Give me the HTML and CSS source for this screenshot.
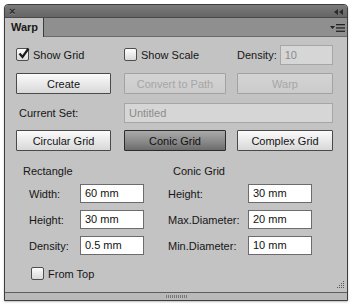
FILE: index.html
```html
<!DOCTYPE html>
<html>
<head>
<meta charset="utf-8">
<link rel="stylesheet" href="styles.css">
</head>
<body>
<div class="panel">
  <div class="titlebar">
    <span class="close">×</span>
    <svg class="collapse" width="9" height="6" viewBox="0 0 9 6"><path d="M4 0 L0 3 L4 6 Z M9 0 L5 3 L9 6 Z" fill="#2a2a2a"/></svg>
  </div>
  <div class="tabbar">
    <div class="tab">Warp</div>
    <svg class="flyout" width="15" height="8" viewBox="0 0 15 8"><path d="M0 2 L5 2 L2.5 5 Z" fill="#222"/><rect x="6" y="0" width="9" height="1.3" fill="#222"/><rect x="6" y="3.3" width="9" height="1.3" fill="#222"/><rect x="6" y="6.6" width="9" height="1.3" fill="#222"/></svg>
  </div>
  <div class="content">
    <div class="row3 r1">
      <label class="check"><span class="box checked"><svg width="13" height="13" viewBox="0 0 13 13"><path d="M2.5 6.5 L5.5 10 L11.5 1.5" fill="none" stroke="#1a1a1a" stroke-width="2.2"/></svg></span>Show Grid</label>
      <label class="check"><span class="box"></span>Show Scale</label>
      <div class="density"><span>Density:</span><span class="input disabled dens">10</span></div>
    </div>
    <div class="row3 r2">
      <div class="btn">Create</div>
      <div class="btn disabled">Convert to Path</div>
      <div class="btn disabled">Warp</div>
    </div>
    <div class="row3 r3">
      <div class="lbl">Current Set:</div>
      <div class="input disabled span2">Untitled</div>
    </div>
    <div class="row3 r4">
      <div class="btn">Circular Grid</div>
      <div class="btn pressed">Conic Grid</div>
      <div class="btn">Complex Grid</div>
    </div>
    <div class="params">
      <div class="head h1">Rectangle</div>
      <div class="head h2">Conic Grid</div>
      <div class="plbl">Width:</div><div class="input">60 mm</div>
      <div class="plbl c4">Height:</div><div class="input">30 mm</div>
      <div class="plbl">Height:</div><div class="input">30 mm</div>
      <div class="plbl c4">Max.Diameter:</div><div class="input">20 mm</div>
      <div class="plbl">Density:</div><div class="input">0.5 mm</div>
      <div class="plbl c4">Min.Diameter:</div><div class="input">10 mm</div>
    </div>
    <label class="check fromtop"><span class="box"></span>From Top</label>
    <svg class="resize" width="9" height="9" viewBox="0 0 9 9" fill="#555"><rect x="7" y="1" width="1" height="1"/><rect x="5" y="3" width="1" height="1"/><rect x="7" y="3" width="1" height="1"/><rect x="3" y="5" width="1" height="1"/><rect x="5" y="5" width="1" height="1"/><rect x="7" y="5" width="1" height="1"/><rect x="1" y="7" width="1" height="1"/><rect x="3" y="7" width="1" height="1"/><rect x="5" y="7" width="1" height="1"/><rect x="7" y="7" width="1" height="1"/></svg>
  </div>
  <div class="bottombar"><span class="grip"></span></div>
</div>
</body>
</html>
```
FILE: styles.css
```css
html, body { margin: 0; padding: 0; background: #fff; }
body {
  font-family: "Liberation Sans", Arial, sans-serif;
  font-size: 11px;
  color: #161616;
  width: 352px;
  height: 305px;
  overflow: hidden;
}
.panel {
  margin: 4px 0 0 4px;
  width: 344px;
  height: 297px;
  box-sizing: border-box;
  border: 1px solid #3e3e3e;
  border-radius: 4px 4px 0 0;
  background: #c3c3c3;
  display: flex;
  flex-direction: column;
  box-shadow: 0 1px 2px rgba(0,0,0,0.25);
}
.titlebar {
  height: 12px;
  flex: none;
  background: linear-gradient(#7a7a7a, #656565);
  border-radius: 3px 3px 0 0;
  display: flex;
  align-items: center;
  justify-content: space-between;
  padding: 0 4px 0 4px;
  border-bottom: 1px solid #4a4a4a;
}
.close {
  font-size: 11px;
  line-height: 10px;
  color: #2b2b2b;
  font-weight: bold;
  text-shadow: 0 1px 0 #8a8a8a;
}
.collapse { margin-top: 1px; }
.tabbar {
  height: 18px;
  flex: none;
  background: #8f8f8f;
  display: flex;
  align-items: stretch;
  justify-content: space-between;
  border-bottom: 1px solid #6a6a6a;
}
.tab {
  width: 39px;
  box-sizing: border-box;
  background: #c3c3c3;
  border-right: 1px solid #3c3c3c;
  margin-bottom: -1px;
  padding: 3px 0 0 6px;
  font-weight: bold;
  color: #1a1a1a;
}
.flyout { align-self: center; margin-right: 2px; margin-top: 2px; }
.content {
  flex: 1;
  position: relative;
  padding: 7px 0 0 11px;
  display: flex;
  flex-direction: column;
}
.row3 {
  display: grid;
  grid-template-columns: 95px 115px 107px;
}
.row3 > :nth-child(2) { margin-left: 13px; }
.row3 > :nth-child(3) { margin-left: 11px; }
.r1 { height: 21px; align-items: center; }
.r2 { margin-top: 8px; height: 21px; }
.r3 { margin-top: 9px; height: 20px; align-items: center; }
.r4 { margin-top: 7px; height: 21px; }
.check { display: flex; align-items: center; gap: 4px; }
.box {
  width: 13px;
  height: 13px;
  box-sizing: border-box;
  border: 1px solid #4e4e4e;
  border-radius: 2px;
  background: linear-gradient(#fdfdfd, #d9d9d9);
  position: relative;
  flex: none;
}
.box svg { position: absolute; left: 0; top: -2px; }
.density { display: flex; align-items: center; justify-content: flex-end; gap: 3px; }
.input {
  box-sizing: border-box;
  height: 20px;
  background: #fff;
  border: 1px solid #6c6c6c;
  padding: 3px 0 0 4px;
  font-size: 11px;
  color: #111;
  line-height: 13px;
}
.input.disabled {
  background: #d6d6d6;
  border-color: #a6a6a6;
  color: #8c8c8c;
}
.dens { width: 63px; height: 20px; }
.span2 { grid-column: 2 / 4; }
.lbl { padding-left: 3px; }
.btn {
  box-sizing: border-box;
  height: 21px;
  border: 1px solid #4a4a4a;
  border-radius: 1px;
  background: linear-gradient(#fbfbfb, #e6e6e6 60%, #d8d8d8);
  display: flex;
  align-items: center;
  justify-content: center;
  font-size: 11px;
  color: #141414;
}
.btn.disabled {
  border-color: #a2a2a2;
  background: linear-gradient(#d4d4d4, #cbcbcb);
  color: #a6a6a6;
}
.btn.pressed {
  border-color: #2c2c2c;
  background: linear-gradient(#a9a9a9, #8a8a8a 55%, #6c6c6c);
  color: #111;
}
.params {
  margin-top: 13px;
  margin-left: 13px;
  display: grid;
  grid-template-columns: 51px 64px 24px 80px 64px;
  grid-template-rows: 13px repeat(3, 19px);
  row-gap: 7px;
  align-items: center;
}
.params .input { height: 19px; padding-top: 2px; }
.head { height: 14px; line-height: 14px; align-self: start; }
.h1 { grid-column: 1 / 3; margin-left: -6px; }
.h2 { grid-column: 4 / 6; margin-left: 5px; }
.plbl { grid-column: 1; }
.params .input { grid-column: 2; }
.plbl.c4 { grid-column: 4; }
.plbl.c4 + .input { grid-column: 5; }
.fromtop { margin-top: 12px; margin-left: 15px; }
.resize { position: absolute; right: 2px; bottom: 3px; }
.bottombar {
  height: 7px;
  flex: none;
  border-top: 1px solid #5e5e5e;
  background: #b9b9b9;
  display: flex;
  justify-content: center;
  align-items: center;
}
.grip {
  width: 21px;
  height: 3px;
  background: repeating-linear-gradient(90deg, #777 0 1px, transparent 1px 2px);
}
```
